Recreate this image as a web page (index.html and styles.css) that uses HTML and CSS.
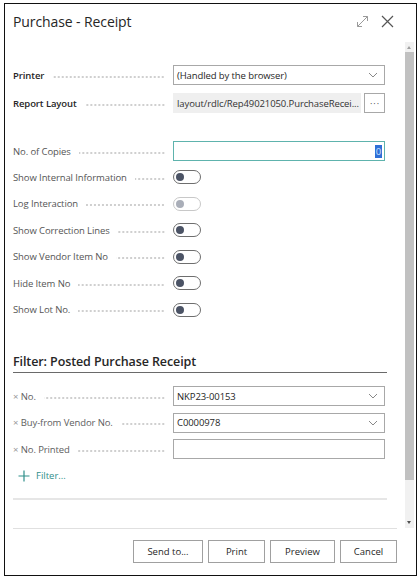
FILE: index.html
```html
<!DOCTYPE html>
<html>
<head>
<meta charset="utf-8">
<link rel="stylesheet" href="styles.css">
</head>
<body>
<div class="frame">
  <div class="header">
    <div class="title">Purchase - Receipt</div>
    <div class="hicons">
      <svg class="expand" width="13" height="13" viewBox="0 0 13 13"><path d="M1.5 11.5 L11.5 1.5 M7 1.5 H11.5 V6 M1.5 7 V11.5 H6" fill="none" stroke="#9a9a9a" stroke-width="1"/></svg>
      <svg class="close" width="13" height="13" viewBox="0 0 13 13"><path d="M1 1 L12 12 M12 1 L1 12" fill="none" stroke="#555" stroke-width="1.2"/></svg>
    </div>
  </div>
  <div class="body">
    <div class="content">
      <div class="row r1">
        <div class="label bold"><span>Printer</span><i class="dots"></i></div>
        <div class="input select"><span>(Handled by the browser)</span><svg class="chev" width="10" height="6" viewBox="0 0 10 6"><path d="M1 1 L5 5 L9 1" fill="none" stroke="#888" stroke-width="1"/></svg></div>
      </div>
      <div class="row r2">
        <div class="label bold"><span>Report Layout</span><i class="dots"></i></div>
        <div class="layoutwrap">
          <div class="input readonly"><span>layout/rdlc/Rep49021050.PurchaseRecei...</span></div>
          <div class="ellipsis">···</div>
        </div>
      </div>
      <div class="row r3">
        <div class="label"><span>No. of Copies</span><i class="dots"></i></div>
        <div class="input focus"><span class="sel">0</span></div>
      </div>
      <div class="trow">
        <div class="label"><span>Show Internal Information</span><i class="dots"></i></div>
        <div class="toggle"><b></b></div>
      </div>
      <div class="trow">
        <div class="label"><span>Log Interaction</span><i class="dots"></i></div>
        <div class="toggle off"><b></b></div>
      </div>
      <div class="trow">
        <div class="label"><span>Show Correction Lines</span><i class="dots"></i></div>
        <div class="toggle"><b></b></div>
      </div>
      <div class="trow">
        <div class="label"><span>Show Vendor Item No</span><i class="dots"></i></div>
        <div class="toggle"><b></b></div>
      </div>
      <div class="trow">
        <div class="label"><span>Hide Item No</span><i class="dots"></i></div>
        <div class="toggle"><b></b></div>
      </div>
      <div class="trow">
        <div class="label"><span>Show Lot No.</span><i class="dots"></i></div>
        <div class="toggle"><b></b></div>
      </div>
      <div class="fhead">Filter: Posted Purchase Receipt</div>
      <div class="row f1">
        <div class="label"><span><em>×</em> No.</span><i class="dots"></i></div>
        <div class="input select"><span>NKP23-00153</span><svg class="chev" width="10" height="6" viewBox="0 0 10 6"><path d="M1 1 L5 5 L9 1" fill="none" stroke="#888" stroke-width="1"/></svg></div>
      </div>
      <div class="row f2">
        <div class="label"><span><em>×</em> Buy-from Vendor No.</span><i class="dots"></i></div>
        <div class="input select"><span>C0000978</span><svg class="chev" width="10" height="6" viewBox="0 0 10 6"><path d="M1 1 L5 5 L9 1" fill="none" stroke="#888" stroke-width="1"/></svg></div>
      </div>
      <div class="row f2">
        <div class="label"><span><em>×</em> No. Printed</span><i class="dots"></i></div>
        <div class="input"></div>
      </div>
      <div class="addfilter">
        <svg width="12" height="12" viewBox="0 0 12 12"><path d="M6 0.5 V11.5 M0.5 6 H11.5" fill="none" stroke="#2f8f8a" stroke-width="1.2"/></svg>
        <span>Filter...</span>
      </div>
      <div class="divider"></div>
    </div>
    <div class="scrollbar">
      <div class="arrow up"></div>
      <div class="thumb"></div>
      <div class="track"></div>
      <div class="arrow down"></div>
    </div>
  </div>
  <div class="footer">
    <button class="btn b1">Send to...</button>
    <button class="btn b2">Print</button>
    <button class="btn b3">Preview</button>
    <button class="btn b4">Cancel</button>
  </div>
</div>
</body>
</html>
```
FILE: styles.css
```css
* { box-sizing: border-box; }
html, body { margin: 0; padding: 0; background: #fff; }
body {
  font-family: "Open Sans", "Noto Sans", sans-serif;
  color: #505050;
  width: 420px;
  height: 581px;
  overflow: hidden;
}
.frame {
  margin: 3px 0 0 4px;
  width: 413px;
  height: 573px;
  border: 1.5px solid #111;
  display: flex;
  flex-direction: column;
}
.header {
  height: 38px;
  display: flex;
  align-items: center;
  justify-content: space-between;
  padding: 0 22px 0 8px;
}
.title {
  font-size: 14px;
  color: #262626;
  letter-spacing: -0.1px;
  margin-top: -3px;
}
.hicons { display: flex; gap: 12px; align-items: center; margin-top: -3px; }
.body {
  height: 486px;
  display: flex;
}
.content {
  flex: 1;
  padding: 23px 18px 0 8px;
}
.row {
  display: flex;
  height: 20px;
  align-items: center;
  margin-bottom: 8px;
}
.row.r3 { margin-top: 28px; margin-bottom: 3px; }
.label {
  width: 160px;
  flex: none;
  display: flex;
  align-items: center;
  font-size: 9.5px;
  letter-spacing: -0.1px;
  color: #555;
  white-space: nowrap;
  padding-right: 8px;
}
.label.bold { font-weight: 600; color: #262626; }
.label em { font-style: normal; color: #999; }
.dots {
  flex: 1;
  height: 2px;
  margin-left: 8px;
  margin-top: 3px;
  background-image: radial-gradient(circle, #b5b5b5 0.6px, transparent 0.9px);
  background-size: 4px 2px;
  background-position: right center;
}
.input {
  width: 212px;
  height: 20px;
  border: 1px solid #a8a8a8;
  display: flex;
  align-items: center;
  justify-content: space-between;
  padding: 0 4px 0 3px;
  font-size: 9.5px;
  letter-spacing: -0.1px;
  color: #262626;
  white-space: nowrap;
}
.chev { margin-right: 2px; }
.layoutwrap { display: flex; width: 212px; gap: 3px; }
.input.readonly {
  width: 188px;
  border: none;
  background: #efefef;
  color: #333;
  padding-left: 4px;
  overflow: hidden;
}
.ellipsis {
  width: 21px;
  height: 20px;
  border: 1px solid #a8a8a8;
  font-size: 9px;
  display: flex;
  align-items: center;
  justify-content: center;
  color: #444;
  letter-spacing: 1px;
  padding-left: 1px;
}
.input.focus {
  border: 1px solid #5eb3ad;
  justify-content: flex-end;
  padding-right: 2px;
}
.sel {
  background: #2f6fd6;
  color: #cfe0ff;
  font-size: 9.5px;
  line-height: 13px;
  padding: 0 1px;
}
.trow {
  display: flex;
  height: 26.5px;
  align-items: center;
}
.toggle {
  width: 28px;
  height: 14px;
  border: 1px solid #6e6e6e;
  border-radius: 7px;
  display: flex;
  align-items: center;
  padding-left: 2px;
}
.toggle b {
  width: 8px;
  height: 8px;
  border-radius: 50%;
  background: #4b5365;
}
.toggle.off { border-color: #c8c8c8; }
.toggle.off b { background: #a9aeb8; }
.fhead {
  margin-top: 29px;
  height: 21px;
  font-size: 12.5px;
  font-weight: 600;
  letter-spacing: -0.1px;
  color: #262626;
  border-bottom: 1px solid #6a6a6a;
  line-height: 19px;
  margin-bottom: 13px;
}
.row.f1, .row.f2 { margin-bottom: 6.5px; }
.row.f1 .label, .row.f2 .label { color: #606060; }
.addfilter {
  height: 20px;
  margin-top: 2.5px;
  display: flex;
  align-items: center;
  gap: 6px;
  padding-left: 5px;
  font-size: 9.5px;
  color: #2f8f8a;
}
.divider {
  margin-top: 12px;
  height: 2px;
  background: #e6e6e6;
}
.scrollbar {
  width: 9px;
  margin-right: 2px;
  display: flex;
  flex-direction: column;
  background: #f1f1f1;
}
.arrow { height: 10px; position: relative; }
.arrow.up::after, .arrow.down::after {
  content: "";
  position: absolute;
  left: 2px;
  width: 0; height: 0;
  border-left: 2.5px solid transparent;
  border-right: 2.5px solid transparent;
}
.arrow.up::after { top: 4px; border-bottom: 3px solid #a0a0a0; }
.arrow.down::after { top: 3px; border-top: 3px solid #505050; }
.thumb { height: 428px; background: #c1c1c1; }
.track { flex: 1; }
.footer {
  flex: 1;
  margin: 0 19px 0 8px;
  border-top: 1px solid #e0e0e0;
  display: flex;
  justify-content: flex-end;
  align-items: flex-start;
  padding-top: 11px;
  gap: 5px;
}
.btn {
  height: 23px;
  background: #fff;
  border: 1px solid #a0a0a0;
  font-family: "Open Sans", "Noto Sans", sans-serif;
  font-size: 9.5px;
  color: #262626;
  padding: 0;
}
.b1 { width: 70px; }
.b2 { width: 57px; }
.b3 { width: 65px; }
.b4 { width: 57px; }
```
